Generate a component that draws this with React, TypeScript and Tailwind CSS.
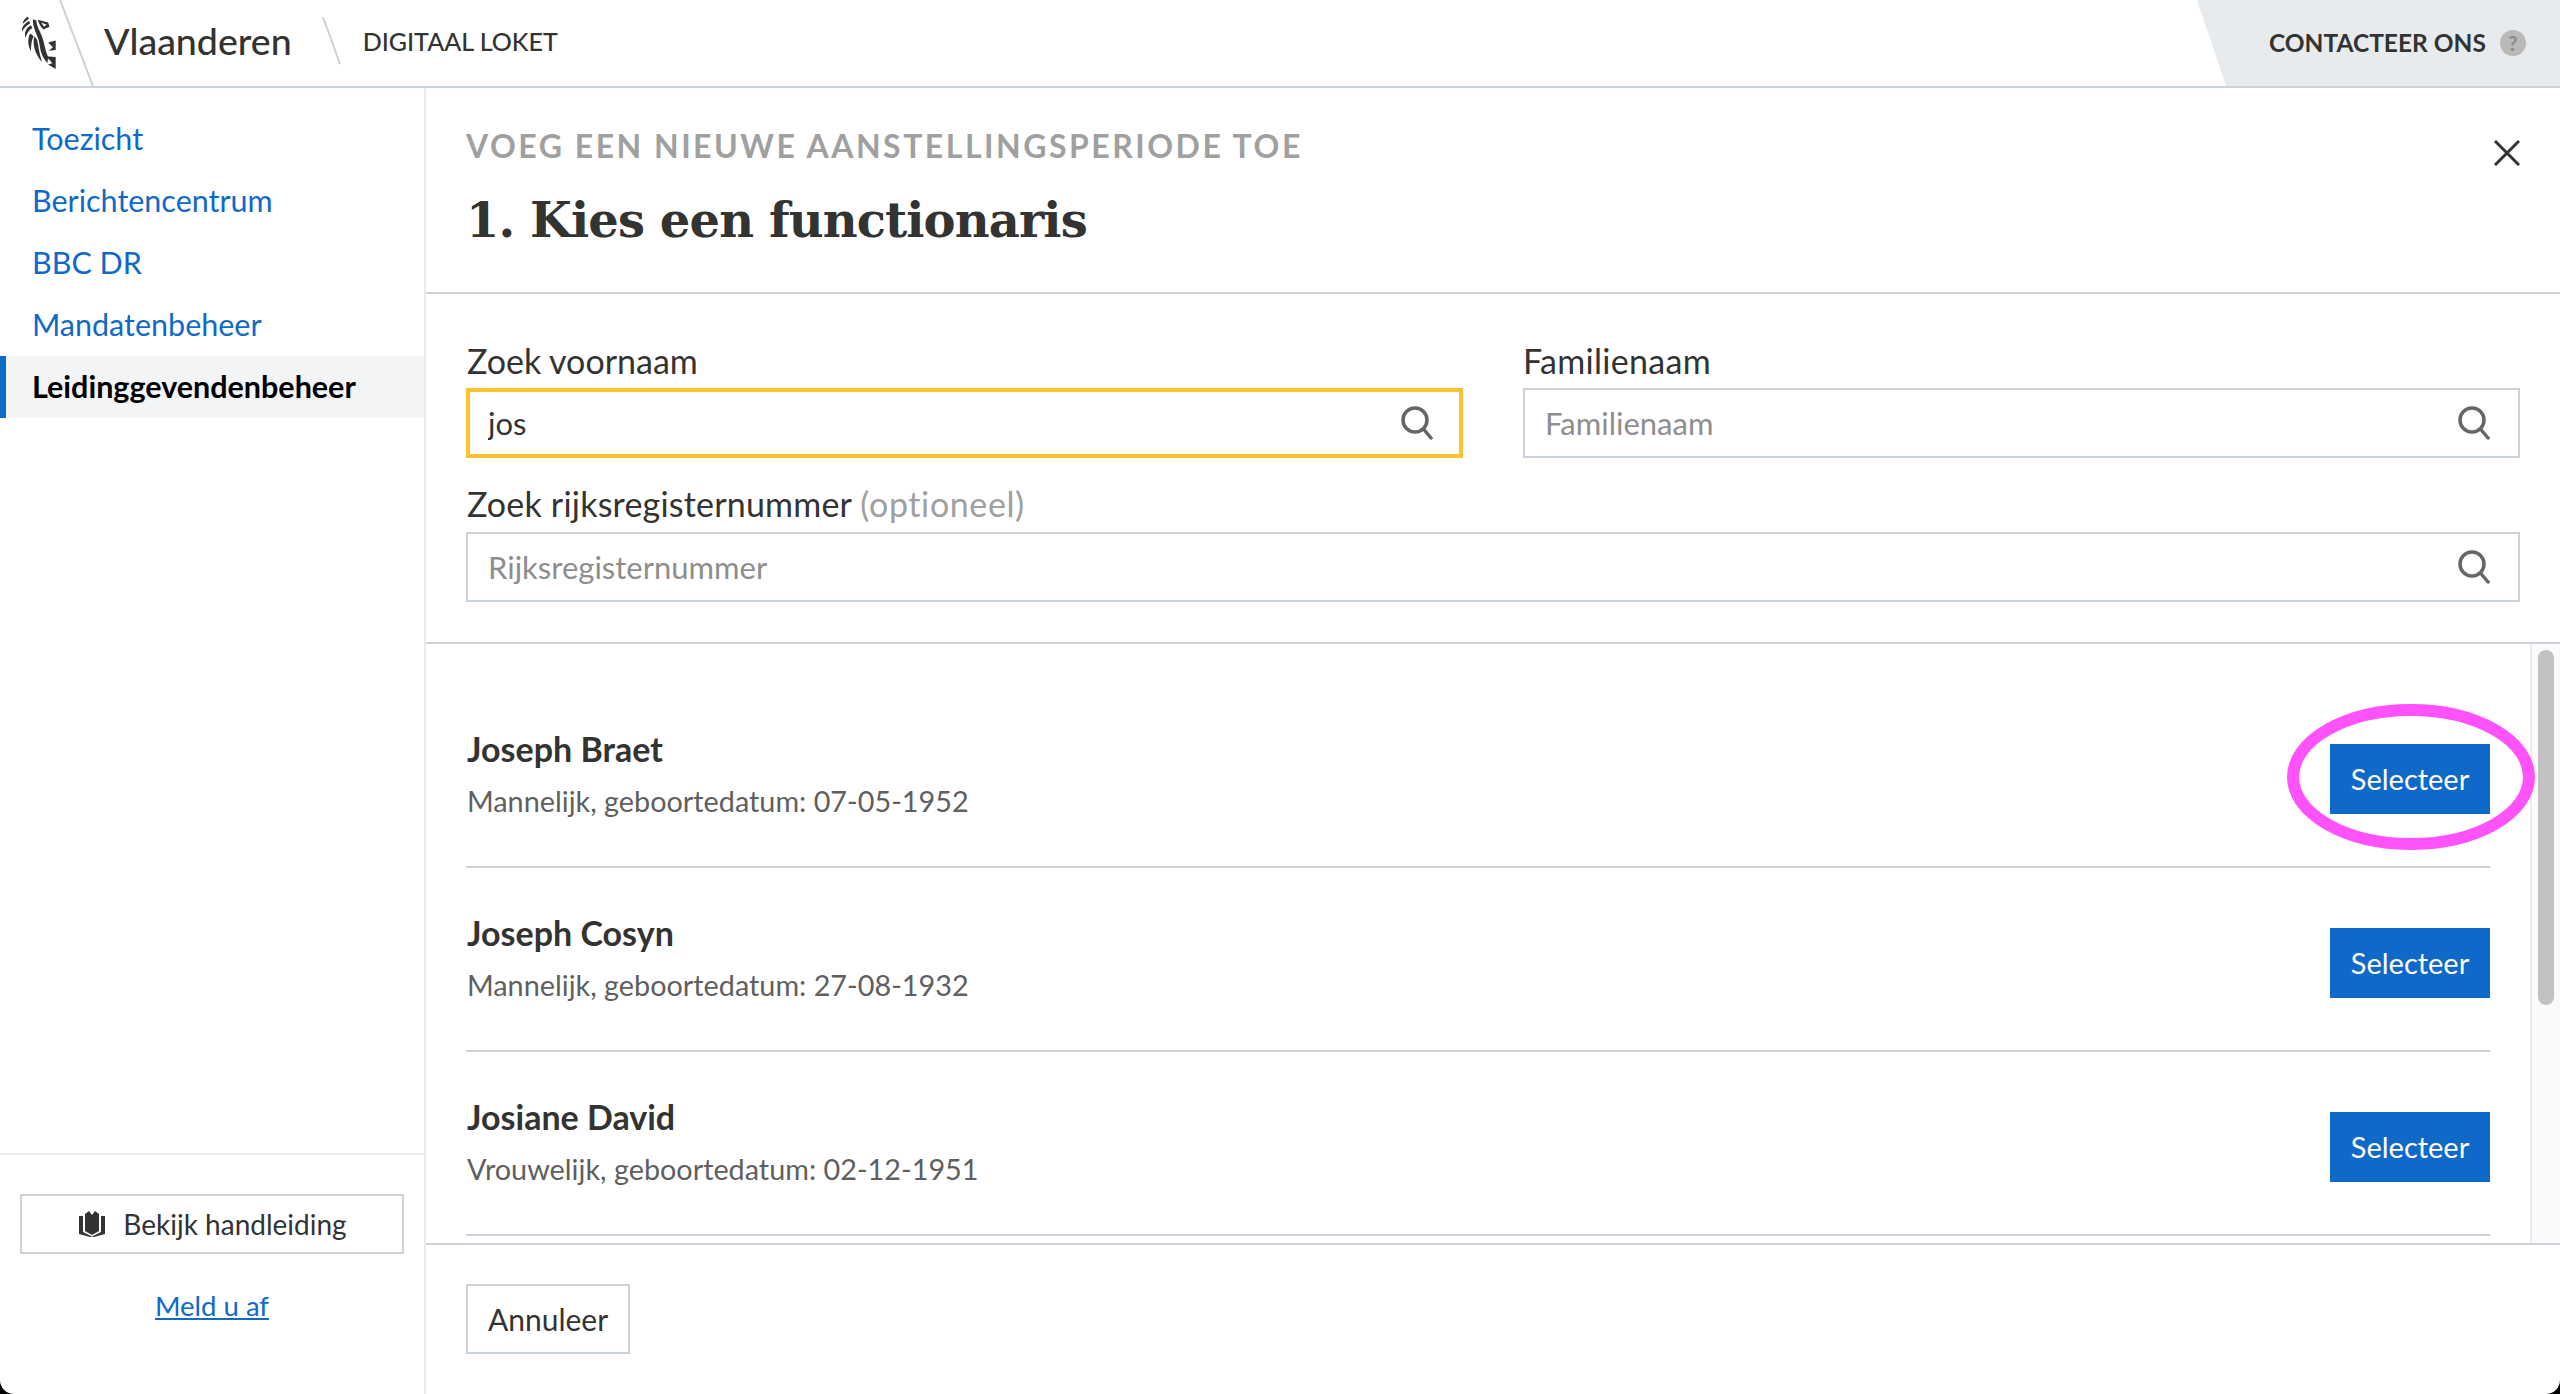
const navItems = ["Toezicht", "Berichtencentrum", "BBC DR", "Mandatenbeheer"];

const people = [
  { name: "Joseph Braet", info: "Mannelijk, geboortedatum: 07-05-1952" },
  { name: "Joseph Cosyn", info: "Mannelijk, geboortedatum: 27-08-1932" },
  { name: "Josiane David", info: "Vrouwelijk, geboortedatum: 02-12-1951" },
];

function LionLogo() {
  return (
    <svg width="35" height="55" viewBox="40 25 100 160" className="ml-[21px] shrink-0" fill="#333332">
      <path d="M58 32 C50 38 44 46 44 54 C50 48 58 42 62 38 Z" />
      <path d="M62 45 C50 52 40 62 42 76 C48 66 56 58 66 52 Z" />
      <path d="M68 58 C54 66 48 78 52 94 C56 82 62 72 72 66 Z" />
      <path d="M66 82 C58 96 58 114 68 134 C68 116 70 100 76 90 Z" />
      <path d="M74 40 C72 60 84 80 90 100 C96 120 92 140 116 168 L118 150 C108 130 108 110 100 90 C94 74 84 60 84 44 Z" />
      <path d="M78 90 C72 110 78 140 100 165 C92 140 90 118 86 100 Z" />
      <path fillRule="evenodd" d="M88 42 L118 50 L122 62 L104 70 C96 62 90 52 88 42 Z M98 50 L114 56 L106 62 Z" />
      <path d="M118 108 L140 102 L140 130 L120 132 L132 122 Z" />
      <path d="M110 148 L140 150 L140 185 L118 172 L130 168 L122 158 Z" />
    </svg>
  );
}

function BookIcon() {
  return (
    <svg width="26" height="26" viewBox="0 0 26 26" fill="#333332" className="ml-[2px] shrink-0">
      <path d="M6 3 L10 0 L13 4 L16 0 L20 3 L20 20 L13 24 L6 20 Z" />
      <path d="M0 5 L4 5 L4 21 L12 25 L13 26 L11 26 L0 23 Z" />
      <path d="M22 5 L26 5 L26 23 L15 26 L13 26 L14 25 L22 21 Z" />
    </svg>
  );
}

function SearchIcon() {
  return (
    <svg width="32" height="34" viewBox="0 0 32 34" fill="none" stroke="#666666" strokeWidth="3.5" className="shrink-0">
      <circle cx="14" cy="14" r="12" />
      <path d="M22.5 23 L30 32" strokeLinecap="round" />
    </svg>
  );
}

function SearchField({ placeholder, value, focused }: { placeholder?: string; value?: string; focused?: boolean }) {
  return (
    <div
      className={
        focused
          ? "flex h-[70px] items-center border-4 border-[#ffc12f] bg-white pl-[18px] pr-[26px]"
          : "flex h-[70px] items-center border-2 border-[#cbd2da] bg-white pl-5 pr-[28px]"
      }
    >
      <input
        readOnly
        value={value}
        placeholder={placeholder}
        className="min-w-0 flex-1 bg-transparent text-[31px] text-[#333332] outline-none placeholder:text-[#8e8e8e]"
      />
      <SearchIcon />
    </div>
  );
}

export default function App() {
  return (
    <div className="h-[1394px] w-[2560px] overflow-hidden bg-black font-['Lato','Liberation_Sans',sans-serif] text-[#333332]">
      <div className="flex h-full flex-col overflow-hidden rounded-b-[14px] bg-white">
        <header className="relative flex h-[88px] shrink-0 items-center border-b-2 border-[#cbd2da] pb-[4px]">
          <LionLogo />
          <svg width="36" height="86" viewBox="0 0 36 86" className="absolute left-[59px] top-0">
            <line x1="1" y1="0" x2="34" y2="86" stroke="#cbd2da" strokeWidth="2" />
          </svg>
          <span className="ml-[48px] text-[37.5px] font-medium leading-none">Vlaanderen</span>
          <svg width="20" height="48" viewBox="0 0 20 48" className="ml-[30px]">
            <line x1="1" y1="0" x2="18" y2="47" stroke="#cbd2da" strokeWidth="2" />
          </svg>
          <span className="ml-[21px] text-[25px] font-medium leading-none">DIGITAAL LOKET</span>
          <div className="ml-auto flex h-[86px] w-[363px] items-center self-start bg-[#e8ebee] pl-[72px] [clip-path:polygon(0_0,100%_0,100%_100%,29px_100%)]">
            <span className="text-[24.5px] font-bold leading-none">CONTACTEER ONS</span>
            <span className="ml-[14px] flex h-[26px] w-[26px] items-center justify-center rounded-full bg-[#b9b9b9] text-[20px] font-bold leading-none text-[#8a8a8a]">
              ?
            </span>
          </div>
        </header>

        <div className="flex min-h-0 flex-1">
          <aside className="flex w-[426px] shrink-0 flex-col border-r-2 border-[#e8ebee]">
            <nav className="flex-1 pt-5">
              {navItems.map((item) => (
                <a key={item} className="flex h-[62px] items-center pl-8 text-[30.5px] text-[#0f69c9]">
                  {item}
                </a>
              ))}
              <a className="flex h-[62px] items-center border-l-[6px] border-[#0f69c9] bg-[#f3f4f6] pl-[26px] text-[30.5px] font-bold text-black">
                Leidinggevendenbeheer
              </a>
            </nav>
            <div className="h-[241px] border-t-2 border-[#e8ebee] px-5 pt-[39px]">
              <button className="flex h-[60px] w-full items-center justify-center gap-[18px] border-2 border-[#cbd2da] text-[28px]">
                <BookIcon />
                Bekijk handleiding
              </button>
              <div className="mt-[31px] text-center">
                <a className="text-[27.5px] text-[#0f69c9] underline">Meld u af</a>
              </div>
            </div>
          </aside>

          <main className="flex min-w-0 flex-1 flex-col">
            <div className="relative h-[206px] shrink-0 border-b-2 border-[#cbd2da] pl-10 pt-[42px]">
              <div className="text-[32px] font-bold leading-none tracking-[2.5px] text-[#a0a0a0]">
                VOEG EEN NIEUWE AANSTELLINGSPERIODE TOE
              </div>
              <h1 className="mt-[34px] font-['DejaVu_Serif',serif] text-[48px] font-bold leading-none tracking-[-0.9px]">
                1. Kies een functionaris
              </h1>
              <svg width="26" height="26" viewBox="0 0 26 26" className="absolute right-[40px] top-[52px]">
                <path d="M1 1 L25 25 M25 1 L1 25" stroke="#333332" strokeWidth="3" />
              </svg>
            </div>

            <div className="h-[350px] shrink-0 border-b-2 border-[#cbd2da] px-10 pt-[44px]">
              <div className="grid grid-cols-2 gap-x-[60px]">
                <div>
                  <label className="block pb-[5px] pl-[1px] text-[34px] leading-[45px]">Zoek voornaam</label>
                  <SearchField value="jos" focused />
                </div>
                <div>
                  <label className="block pb-[5px] text-[34px] leading-[45px] tracking-[0.3px]">Familienaam</label>
                  <SearchField placeholder="Familienaam" />
                </div>
              </div>
              <label className="mt-[21px] block pb-[3px] pl-[1px] text-[34px] leading-[50px] tracking-[0.2px]">
                Zoek rijksregisternummer <span className="tracking-[0.6px] text-[#a0a0a0]">(optioneel)</span>
              </label>
              <SearchField placeholder="Rijksregisternummer" />
            </div>

            <div className="relative flex min-h-0 flex-1 overflow-hidden">
              <div className="min-w-0 flex-1 pl-10 pr-10 pt-10">
                {people.map((person) => (
                  <div key={person.name} className="flex h-[184px] items-start justify-between border-b-2 border-[#cbd2da] pt-[42px]">
                    <div className="pl-[1px]">
                      <div className="text-[34px] font-bold leading-[46px]">{person.name}</div>
                      <div className="mt-[6px] text-[28.8px] leading-[46px] text-[#5f5f5f]">{person.info}</div>
                    </div>
                    <button className="mt-[18px] h-[70px] w-[160px] bg-[#0f69c9] text-[29px] text-white">Selecteer</button>
                  </div>
                ))}
              </div>
              <div className="w-[30px] shrink-0 border-l-2 border-[#ececec] bg-[#fafafa] pl-[6px] pt-[6px]">
                <div className="h-[355px] w-4 rounded-full bg-[#c1c1c1]" />
              </div>
              <svg width="250" height="148" viewBox="0 0 250 148" className="absolute left-[1860px] top-[59px]">
                <ellipse cx="125" cy="74" rx="118" ry="67" fill="none" stroke="#ff52fb" strokeWidth="12" />
              </svg>
            </div>

            <div className="h-[151px] shrink-0 border-t-2 border-[#cbd2da] pl-10 pt-[39px]">
              <button className="h-[70px] w-[164px] border-2 border-[#cbd2da] text-[30px]">Annuleer</button>
            </div>
          </main>
        </div>
      </div>
    </div>
  );
}
